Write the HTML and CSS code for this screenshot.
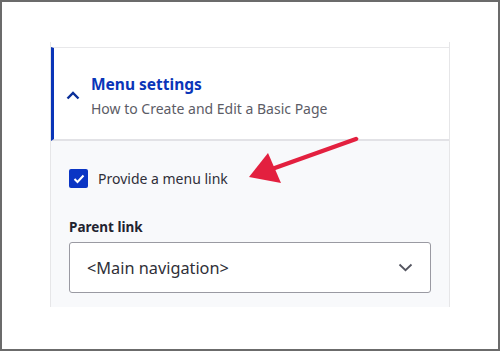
FILE: index.html
```html
<!DOCTYPE html>
<html>
<head>
    <title>Menu settings</title>
    <link rel="stylesheet" href="styles.css">
</head>
<body>
    <div class="frame">
        <div class="panel">
            <div class="panel-header">
                <svg class="toggle" width="14" height="9" viewBox="0 0 14 9">
                    <path d="M1.5 7.5 L7 2 L12.5 7.5" fill="none" stroke="#0a2f99" stroke-width="2.4"/>
                </svg>
                <div class="heading">
                    <div class="title">Menu settings</div>
                    <div class="summary">How to Create and Edit a Basic Page</div>
                </div>
            </div>
            <div class="panel-body">
                <label class="check-row">
                    <span class="checkbox">
                        <svg width="12" height="10" viewBox="0 0 12 10">
                            <path d="M1.5 5 L4.5 8 L10.5 1.5" fill="none" stroke="#fff" stroke-width="2"/>
                        </svg>
                    </span>
                    Provide a menu link
                </label>
                <div class="field-label">Parent link</div>
                <div class="select">
                    <span>&lt;Main navigation&gt;</span>
                    <svg width="15" height="9" viewBox="0 0 15 9">
                        <path d="M1.5 1.5 L7.5 7.2 L13.5 1.5" fill="none" stroke="#545560" stroke-width="1.8"/>
                    </svg>
                </div>
            </div>
        </div>

        <!-- annotation arrow -->
        <svg class="arrow" width="500" height="351" viewBox="0 0 500 351">
            <line x1="356" y1="139" x2="272" y2="169" stroke="#e3203f" stroke-width="4.5" stroke-linecap="round"/>
            <polygon points="249,177 268,153 281,183" fill="#e3203f"/>
        </svg>
    </div>
</body>
</html>
```

FILE: styles.css
```css
body {
    margin: 0;
    font-family: "Noto Sans", "Open Sans", sans-serif;
}

.frame {
    position: relative;
    width: 500px;
    height: 351px;
    box-sizing: border-box;
    border: 2px solid #6b6b6b;
    background: #fff;
    padding: 40px 48px 0 48px;
}

.panel {
    width: 400px;
    box-sizing: border-box;
    border-left: 1px solid #e6e6e8;
    border-right: 1px solid #e6e6e8;
    padding-top: 5px;
}

.panel-header {
    display: flex;
    align-items: center;
    height: 94px;
    box-sizing: border-box;
    border-top: 1px solid #e8e8ea;
    border-left: 3px solid #0a35b8;
    border-bottom: 2px solid #e2e2e6;
    padding-left: 12px;
    background: #fff;
}

.toggle {
    margin-top: 4px;
    margin-right: 11px;
}

.heading {
    padding-top: 5px;
}

.title {
    color: #0a35b8;
    font-size: 15.5px;
    font-weight: bold;
    line-height: 20px;
}

.summary {
    color: #5c5c66;
    font-size: 14px;
    line-height: 20px;
    margin-top: 5px;
}

.panel-body {
    background: #f8f9fb;
    height: 166px;
    box-sizing: border-box;
    padding: 28px 18px 0 18px;
}

.check-row {
    display: flex;
    align-items: center;
    color: #2f2f38;
    font-size: 14px;
}

.checkbox {
    display: flex;
    align-items: center;
    justify-content: center;
    width: 19px;
    height: 19px;
    border-radius: 2px;
    background: #0a35c4;
    margin-right: 10px;
}

.field-label {
    margin-top: 30px;
    font-size: 13.5px;
    font-weight: bold;
    color: #222330;
}

.select {
    display: flex;
    align-items: center;
    justify-content: space-between;
    margin-top: 6px;
    height: 51px;
    box-sizing: border-box;
    border: 1px solid #9a9aa2;
    border-radius: 3px;
    background: #fff;
    padding: 0 17px 0 17px;
    font-size: 16.3px;
    color: #2f2f38;
}

.arrow {
    position: absolute;
    left: -2px;
    top: -2px;
}
```
